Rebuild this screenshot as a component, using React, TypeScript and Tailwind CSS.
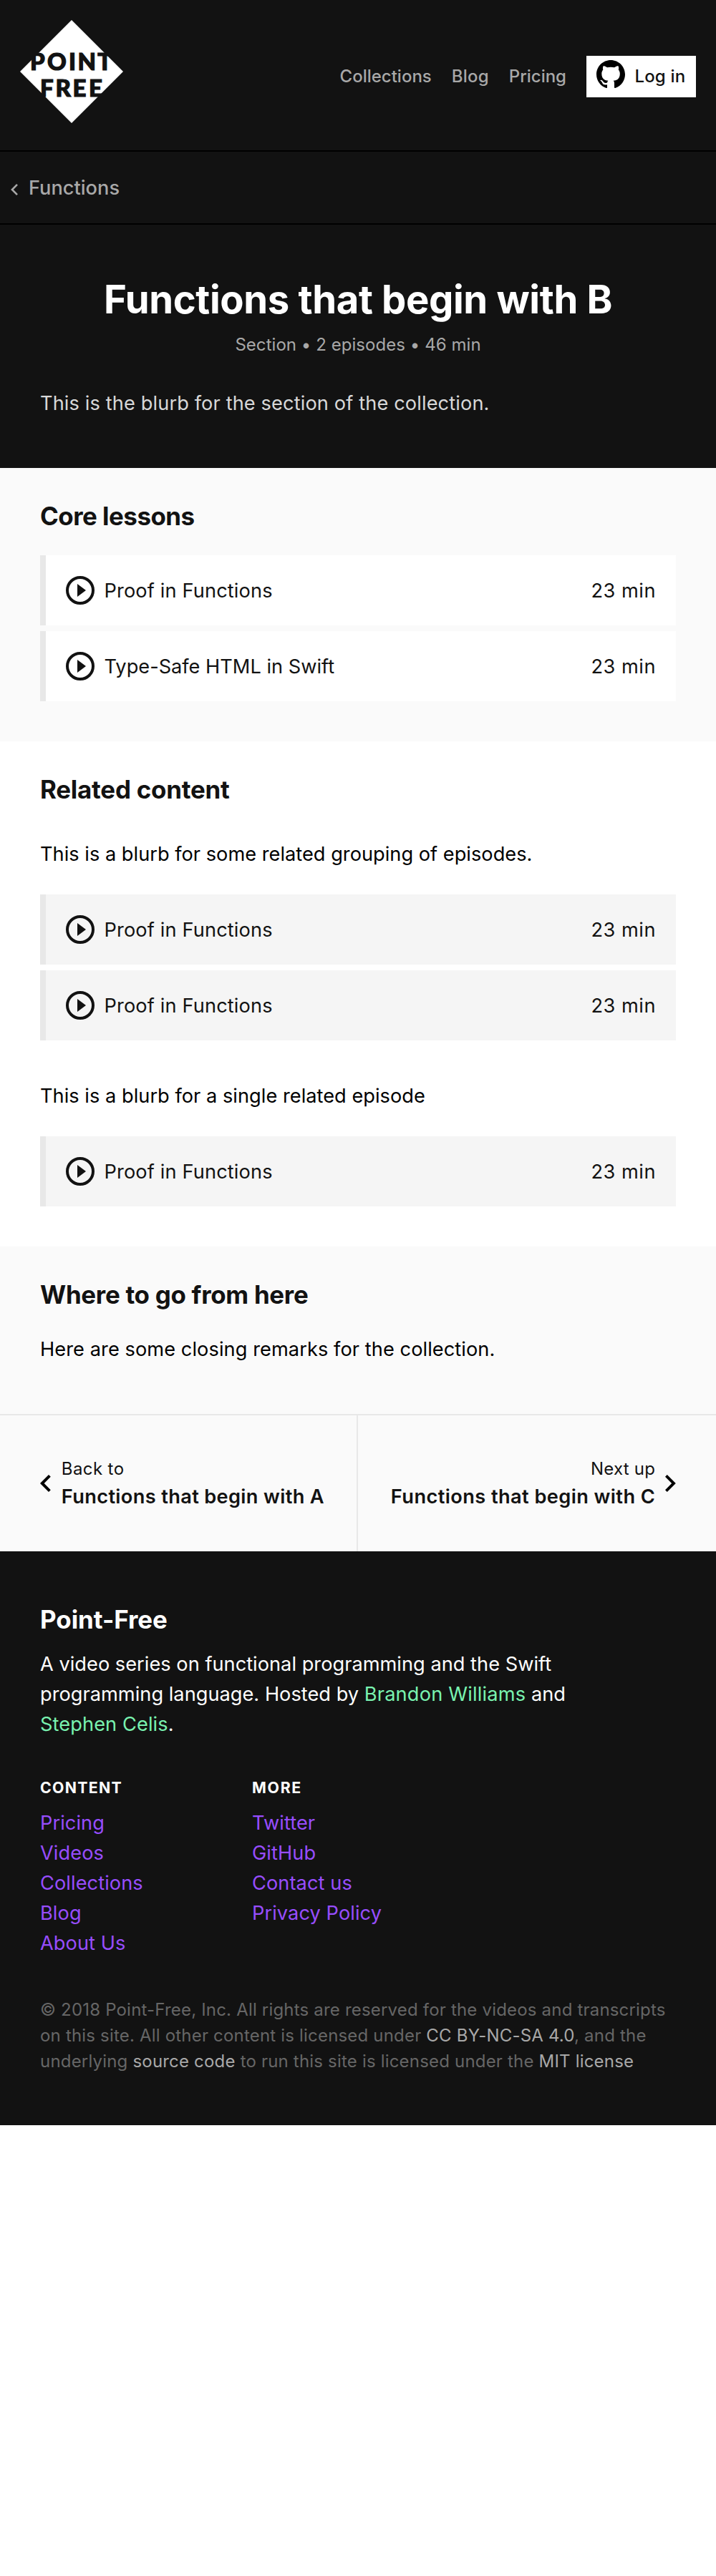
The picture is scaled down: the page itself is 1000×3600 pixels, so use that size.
import React from "react";

function Logo() {
  return (
    <svg className="block size-36" viewBox="0 0 144 144" aria-label="Point-Free">
      <path d="M72 0 144 72 72 144 0 72Z" fill="#fff" />
      <g fill="#121212" stroke="#121212" strokeWidth="1.2" fontFamily="Lato" fontWeight="900" fontSize="33">
        <text x="13.9 38 67.9 80.4 108.3" y="69.9">POINT</text>
        <text x="27.9 49.5 73.5 95.9" y="106.9">FREE</text>
      </g>
    </svg>
  );
}

function GitHubMark() {
  return (
    <svg className="block size-10 shrink-0" viewBox="0 0 16 16" fill="#000">
      <path d="M8 0C3.58 0 0 3.58 0 8c0 3.54 2.29 6.53 5.47 7.59.4.07.55-.17.55-.38 0-.19-.01-.82-.01-1.49-2.01.37-2.53-.49-2.69-.94-.09-.23-.48-.94-.82-1.13-.28-.15-.68-.52-.01-.53.63-.01 1.08.58 1.23.82.72 1.21 1.87.87 2.33.66.07-.52.28-.87.51-1.07-1.78-.2-3.64-.89-3.64-3.95 0-.87.31-1.59.82-2.15-.08-.2-.36-1.02.08-2.12 0 0 .67-.21 2.2.82.64-.18 1.32-.27 2-.27.68 0 1.36.09 2 .27 1.53-1.04 2.2-.82 2.2-.82.44 1.1.16 1.92.08 2.12.51.56.82 1.27.82 2.15 0 3.07-1.87 3.75-3.65 3.95.29.25.54.73.54 1.48 0 1.07-.01 1.93-.01 2.2 0 .21.15.46.55.38A8.013 8.013 0 0016 8c0-4.42-3.58-8-8-8z" />
    </svg>
  );
}

function PlayIcon() {
  return (
    <svg className="block size-10 shrink-0" viewBox="0 0 40 40">
      <circle cx="20" cy="20" r="18" fill="none" stroke="#121212" strokeWidth="4" />
      <path d="M16 11v18l12-9Z" fill="#121212" />
    </svg>
  );
}

function Chevron({ className, flip = false }: { className: string; flip?: boolean }) {
  return (
    <svg className={className} viewBox="0 0 14.8 24" fill="currentColor">
      <path
        d="M14.8 2.8 5.66 12l9.14 9.2L12 24 0 12 12 0Z"
        transform={flip ? "matrix(-1 0 0 1 14.8 0)" : undefined}
      />
    </svg>
  );
}

function Episode({ title, tone, tracking }: { title: string; tone: string; tracking: string }) {
  return (
    <a className={`flex h-[98px] items-center border-l-8 border-[#e8e8e8] px-7 text-[27.2px] leading-[42px] text-[#121212] ${tone}`}>
      <PlayIcon />
      <span className={`ml-[13.5px] grow pt-[2px] ${tracking}`}>{title}</span>
      <span className="pt-[2px] tracking-[0.5px]">23 min</span>
    </a>
  );
}

const proof = { title: "Proof in Functions", tracking: "tracking-[0.135px]" };
const html = { title: "Type-Safe HTML in Swift", tracking: "tracking-[0px]" };

function Heading({ children, className }: { children: React.ReactNode; className: string }) {
  return <h2 className={`text-[34.9px] leading-[50px] font-bold ${className}`}>{children}</h2>;
}

function LinkColumn({ title, titleClass, links }: { title: string; titleClass: string; links: string[] }) {
  return (
    <div className="w-[296px]">
      <h3 className={`text-[21.3px] leading-[34px] font-bold text-white ${titleClass}`}>{title}</h3>
      <ul className="mt-3 text-[#974dff]">
        {links.map((l) => (
          <li key={l} className="tracking-[0.08px]">{l}</li>
        ))}
      </ul>
    </div>
  );
}

export default function App() {
  return (
    <div className="w-full bg-white font-['Inter',sans-serif] text-[27.2px] leading-[42px] text-black">
      <header className="flex h-[210px] items-start justify-between bg-[#121212] px-7 pt-7">
        <Logo />
        <nav className="mt-[50px] flex h-[58px] items-center gap-7 text-[24px] leading-9 font-medium text-[#a8a8a8]">
          <a>Collections</a>
          <a className="tracking-[0.2px]">Blog</a>
          <a>Pricing</a>
          <a className="flex h-[58px] w-[153px] bg-white pt-[6px] pl-[14px] text-[#121212]">
            <GitHubMark />
            <span className="mt-[5px] ml-[13.5px] tracking-[0.15px] whitespace-nowrap">Log in</span>
          </a>
        </nav>
      </header>

      <div className="flex h-[104px] items-center border-y-2 border-black bg-[#121212] pt-[2px] pl-[15px] font-medium text-[#a8a8a8]">
        <Chevron className="mt-[3px] h-4 w-[10px]" />
        <span className="ml-[15px]">Functions</span>
      </div>

      <section className="h-[340px] bg-[#121212] px-14 pt-[70px]">
        <h1 className="text-center text-[54.4px] leading-[68px] font-bold tracking-[-0.35px] text-white">
          Functions that begin with B
        </h1>
        <p className="mt-3 text-center text-[24px] leading-9 tracking-[0.05px] text-[#a8a8a8]">
          Section • 2 episodes • 46 min
        </p>
        <p className="mt-[43px] tracking-[0.122px] text-[#d8d8d8]">
          This is the blurb for the section of the collection.
        </p>
      </section>

      <section className="bg-[#fafafa] px-14 pt-[42px] pb-14">
        <Heading className="tracking-[-0.5px] text-[#121212]">Core lessons</Heading>
        <div className="mt-[30px] flex flex-col gap-2">
          <Episode {...proof} tone="bg-white" />
          <Episode {...html} tone="bg-white" />
        </div>
      </section>

      <section className="bg-white px-14 pt-[42px] pb-14">
        <Heading className="tracking-[-0.22px] text-[#121212]">Related content</Heading>
        <p className="mt-[45px] tracking-[0.016px]">This is a blurb for some related grouping of episodes.</p>
        <div className="mt-[35px] flex flex-col gap-2">
          <Episode {...proof} tone="bg-[#f5f5f5]" />
          <Episode {...proof} tone="bg-[#f5f5f5]" />
        </div>
        <p className="mt-[57px] tracking-[0.03px]">This is a blurb for a single related episode</p>
        <div className="mt-[35px]">
          <Episode {...proof} tone="bg-[#f5f5f5]" />
        </div>
      </section>

      <section className="h-[234px] bg-[#fafafa] px-14 pt-[42px]">
        <Heading className="tracking-[-0.28px] text-[#121212]">Where to go from here</Heading>
        <p className="mt-[31px] tracking-[0.072px]">Here are some closing remarks for the collection.</p>
      </section>

      <nav className="grid h-48 grid-cols-2 border-t-2 border-[#e8e8e8] bg-[#fafafa] text-[#121212]">
        <a className="flex items-center border-r-2 border-[#e8e8e8] pl-14">
          <Chevron className="h-6 w-[14.8px] text-black" />
          <span className="ml-[15px] flex flex-col pt-px">
            <span className="text-[24px] leading-9 tracking-[0.4px]">Back to</span>
            <span className="font-semibold tracking-[0.35px]">Functions that begin with A</span>
          </span>
        </a>
        <a className="flex items-center justify-end pr-14">
          <span className="mr-[14px] flex flex-col pt-px text-right">
            <span className="text-[24px] leading-9 tracking-[0.22px]">Next up</span>
            <span className="font-semibold tracking-[0.42px]">Functions that begin with C</span>
          </span>
          <Chevron flip className="h-6 w-[14.8px] text-black" />
        </a>
      </nav>

      <footer className="h-[802px] bg-[#121212] px-14 pt-[70px] text-white">
        <Heading className="tracking-[-0.04px]">Point-Free</Heading>
        <p className="mt-[17px] w-[760px] tracking-[0.02px]">
          A video series on functional programming and the Swift
          <br />
          programming language. Hosted by <a className="tracking-[0.185px] text-[#79f2b0]">Brandon Williams</a> and
          <br />
          <a className="tracking-[0.1px] text-[#79f2b0]">Stephen Celis</a>.
        </p>
        <div className="mt-[50px] flex">
          <LinkColumn
            title="CONTENT"
            titleClass="tracking-[1.3px]"
            links={["Pricing", "Videos", "Collections", "Blog", "About Us"]}
          />
          <LinkColumn
            title="MORE"
            titleClass="tracking-[1.7px]"
            links={["Twitter", "GitHub", "Contact us", "Privacy Policy"]}
          />
        </div>
        <p className="mt-[54px] text-[24px] leading-9 tracking-[0.19px] whitespace-nowrap text-[#666]">
          © 2018 Point-Free, Inc. All rights are reserved for the videos and transcripts
          <br />
          on this site. All other content is licensed under <a className="text-[#a8a8a8]">CC BY-NC-SA 4.0</a>, and the
          <br />
          underlying <a className="text-[#a8a8a8]">source code</a> to run this site is licensed under the{" "}
          <a className="text-[#a8a8a8]">MIT license</a>
        </p>
      </footer>
    </div>
  );
}
